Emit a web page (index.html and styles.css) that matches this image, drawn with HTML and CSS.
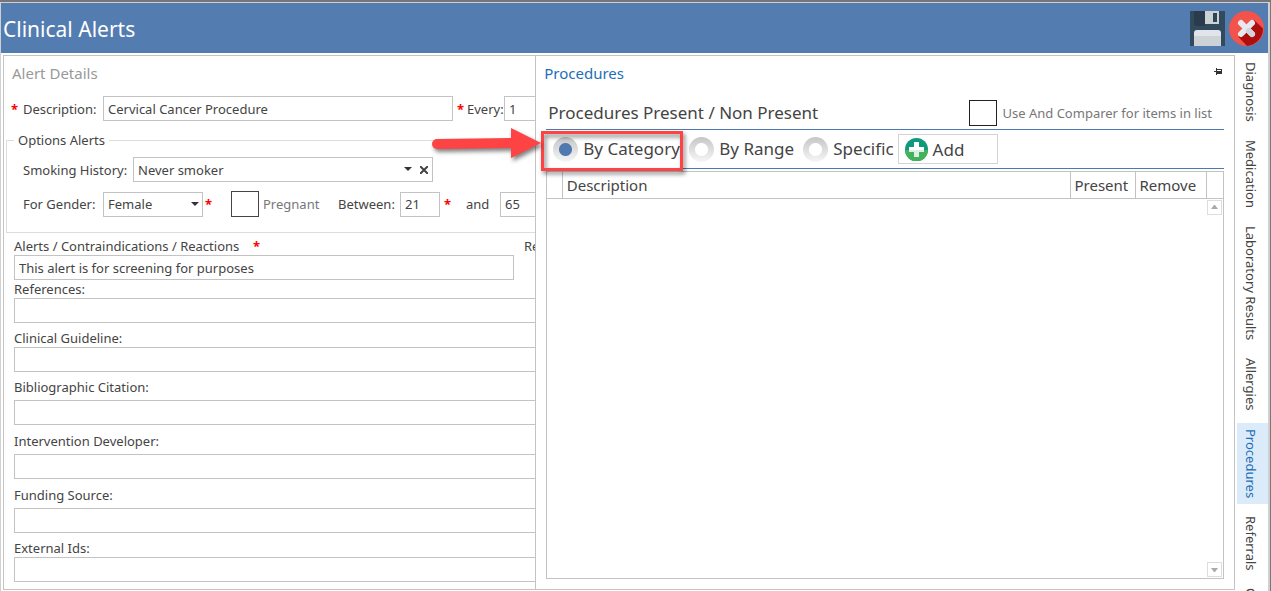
FILE: index.html
```html
<!DOCTYPE html>
<html lang="en">
<head>
    <meta charset="UTF-8">
    <meta name="viewport" content="width=device-width, initial-scale=1.0">
    <title>Clinical Alerts</title>
    <link rel="stylesheet" href="styles.css">
</head>
<body>
    <div class="window">
        <header class="titlebar">
            <h1>Clinical Alerts</h1>
            <button type="button" class="icon-btn" aria-label="Save">
                <svg width="35" height="35" viewBox="0 0 35 35">
                    <path fill="#324a5e" d="M0 0h35v35H0z"/>
                    <path fill="#2b3b4e" d="M4 0h11v15H7a3 3 0 0 1-3-3z"/>
                    <path fill="#cdd2d6" d="M15 0h14v13H15z"/>
                    <path fill="#2f4454" d="M23 2h4v9h-4z"/>
                    <path fill="#e1e5e9" d="M4 25v-3a3 3 0 0 1 3-3h21a3 3 0 0 1 3 3v3z"/>
                    <path fill="#cdd2d6" d="M4 25h27v10H4z"/>
                </svg>
            </button>
            <button type="button" class="icon-btn" aria-label="Close">
                <svg width="35" height="35" viewBox="0 0 35 35">
                    <circle cx="17.500" cy="17.500" r="17.500" fill="#f3534b"/>
                    <path fill="#ad0e0e" d="M25 9l9 8.500A17.500 17.500 0 0 1 18 35L9.500 26z"/>
                    <path stroke="#e6e9ee" stroke-width="6" stroke-linecap="round" d="M12 12l11 11M23 12L12 23"/>
                    <path stroke="#d0d5da" stroke-width="6" stroke-linecap="round" d="M20 20l3 3"/>
                </svg>
            </button>
        </header>

        <div class="content">
            <form class="details">
                <h2 class="panel-title muted">Alert Details</h2>
                <div class="row row-description">
                    <span class="req">*</span>
                    <label for="description">Description:</label>
                    <input type="text" id="description" class="box w-description" value="Cervical Cancer Procedure">
                    <span class="req">*</span>
                    <label for="every">Every:</label>
                    <input type="text" id="every" class="box w-small" value="1">
                </div>

                <fieldset class="options">
                    <legend>Options Alerts</legend>
                    <div class="row">
                        <label for="smoking" class="label-smoking">Smoking History:</label>
                        <div class="combo w-smoking">
                            <select id="smoking" class="box">
                                <option>Never smoker</option>
                            </select>
                            <svg class="caret caret-clear" width="8" height="4" viewBox="0 0 8 4"><path fill="#333" d="M0 0h8L4 4z"/></svg>
                            <button type="button" class="clear" aria-label="Clear">
                                <svg width="8" height="8" viewBox="0 0 8 8"><path stroke="#444" stroke-width="2" d="M0 0l8 8M8 0L0 8"/></svg>
                            </button>
                        </div>
                    </div>
                    <div class="row row-gender">
                        <label for="gender" class="label-gender">For Gender:</label>
                        <div class="combo w-gender">
                            <select id="gender" class="box">
                                <option>Female</option>
                            </select>
                            <svg class="caret" width="8" height="4" viewBox="0 0 8 4"><path fill="#333" d="M0 0h8L4 4z"/></svg>
                        </div>
                        <span class="req req-gender">*</span>
                        <input type="checkbox" id="pregnant" class="check">
                        <label for="pregnant" class="label-pregnant">Pregnant</label>
                        <label for="ageFrom" class="label-between">Between:</label>
                        <input type="text" id="ageFrom" class="box w-age" value="21">
                        <span class="req req-age">*</span>
                        <label for="ageTo" class="label-and">and</label>
                        <input type="text" id="ageTo" class="box w-small" value="65">
                    </div>
                </fieldset>

                <div class="fields">
                    <div class="field">
                        <div class="field-head">
                            <label for="alerts">Alerts / Contraindications / Reactions</label>
                            <span class="req">*</span>
                            <span class="next-label">Re</span>
                        </div>
                        <input type="text" id="alerts" class="box w-alerts" value="This alert is for screening for purposes">
                    </div>
                    <div class="field">
                        <label for="references">References:</label>
                        <input type="text" id="references" class="box">
                    </div>
                    <div class="field spaced">
                        <label for="guideline">Clinical Guideline:</label>
                        <input type="text" id="guideline" class="box">
                    </div>
                    <div class="field spaced loose">
                        <label for="citation">Bibliographic Citation:</label>
                        <input type="text" id="citation" class="box">
                    </div>
                    <div class="field spaced loose">
                        <label for="developer">Intervention Developer:</label>
                        <input type="text" id="developer" class="box">
                    </div>
                    <div class="field spaced loose">
                        <label for="funding">Funding Source:</label>
                        <input type="text" id="funding" class="box">
                    </div>
                    <div class="field spaced">
                        <label for="external">External Ids:</label>
                        <input type="text" id="external" class="box">
                    </div>
                </div>
            </form>

            <section class="procedures">
                <div class="panel-head">
                    <h2 class="panel-title accent">Procedures</h2>
                    <button type="button" class="pin" aria-label="Pin">
                        <svg width="9" height="7" viewBox="0 0 9 7"><path fill="#333" d="M0 3h2V0h1v1h5v5H3v1H2V4H0z"/><path fill="#fff" d="M3 2h4v1H3z"/></svg>
                    </button>
                </div>
                <div class="list-head">
                    <h3>Procedures Present / Non Present</h3>
                    <input type="checkbox" id="andComparer" class="check">
                    <label for="andComparer">Use And Comparer for items in list</label>
                </div>
                <div class="modes">
                    <label class="mode mode-category"><input type="radio" name="mode" checked>By Category</label>
                    <label class="mode mode-range"><input type="radio" name="mode">By Range</label>
                    <label class="mode"><input type="radio" name="mode">Specific</label>
                    <button type="button" class="add">
                        <svg width="23" height="23" viewBox="0 0 23 23">
                            <circle cx="11.500" cy="11.500" r="11.500" fill="#0e9b7b"/>
                            <path fill="#45b15d" d="M0 12h23a11.500 11.500 0 0 1-23 0z"/>
                            <path fill="#fff" d="M9 4h5v5h5v5h-5v5H9v-5H4V9h5z"/>
                            <path fill="#dcefe3" d="M4 12h15v2h-5v5H9v-5H4z"/>
                        </svg>
                        Add
                    </button>
                </div>
                <div class="grid">
                    <table>
                        <thead>
                            <tr>
                                <th class="col-handle"></th>
                                <th>Description</th>
                                <th class="col-present">Present</th>
                                <th class="col-remove">Remove</th>
                                <th class="col-scroll"></th>
                            </tr>
                        </thead>
                        <tbody></tbody>
                    </table>
                    <div class="scrollbar">
                        <button type="button" aria-label="Scroll up"><svg width="7" height="4" viewBox="0 0 7 4"><path fill="#aaa" d="M0 4h7L4 0H3z"/></svg></button>
                        <button type="button" aria-label="Scroll down"><svg width="7" height="4" viewBox="0 0 7 4"><path fill="#aaa" d="M0 0h7L4 4H3z"/></svg></button>
                    </div>
                </div>

                <div class="callout"></div>
                <svg class="arrow" width="116" height="40" viewBox="0 0 116 40">
                    <path fill="#fd4343" d="M5 13L79 12V2l30 15-30 15V22L5 23a5 5 0 0 1 0-10z"/>
                </svg>
            </section>

            <nav class="tabs">
                <a href="#diagnosis">Diagnosis</a>
                <a href="#medication">Medication</a>
                <a href="#laboratory">Laboratory Results</a>
                <a href="#allergies">Allergies</a>
                <a href="#procedures" class="active">Procedures</a>
                <a href="#referrals">Referrals</a>
                <a href="#more">C</a>
            </nav>
        </div>
    </div>
</body>
</html>
```
FILE: styles.css
```css
* {
    box-sizing: border-box;
}
body {
    margin: 0;
    font-family: "Noto Sans", "Open Sans", sans-serif;
    font-size: 13px;
    line-height: 18px;
    color: #444;
    background: #777;
}
h1, h2, h3 {
    margin: 0;
    font-weight: normal;
}
button {
    padding: 0;
    border: 0;
    background: none;
    font-family: inherit;
    color: inherit;
}
svg {
    display: block;
    fill: none;
}
.window {
    display: flex;
    flex-direction: column;
    height: 100vh;
    border-top: 2px solid #77747a;
    border-right: 1px solid #777;
    overflow: hidden;
}
.titlebar {
    display: flex;
    flex: none;
    align-items: center;
    gap: 4px;
    height: 51px;
    padding: 0 4px 0 2px;
    background: #537cb0;
    color: #fff;
    border: 1px solid #d0d0d0;
    border-right-width: 2px;
    border-bottom: 0;
}
.titlebar h1 {
    flex: 1;
    padding-top: 2px;
    font-size: 21px;
    line-height: 28px;
}
.content {
    display: flex;
    flex: 1;
    min-height: 0;
    padding: 2px 0 0 2px;
    background: #fff;
    border-left: 1px solid #d0d0d0;
    border-right: 2px solid #d0d0d0;
}

/* left form */
.details {
    flex: 1;
    min-width: 0;
    margin-bottom: 1px;
    border: 1px solid #c3c3c3;
    border-right: 0;
    overflow: hidden;
}
.panel-title {
    font-size: 15px;
    line-height: 20px;
}
.details .panel-title {
    padding: 7px 8px 13px;
}
.muted {
    color: #999;
}
.accent {
    color: #1e6fb8;
}
.row {
    display: flex;
    align-items: center;
    white-space: nowrap;
}
.row > * {
    flex: none;
}
.req {
    color: #f00;
    font-weight: bold;
    width: 8px;
}
.row-description {
    padding-left: 7px;
}
.row-description label {
    width: 80px;
    margin-left: 4px;
}
.row-description .req ~ .req {
    margin-left: 4px;
}
.row-description .req ~ .req + label {
    width: 37px;
    margin-left: 2px;
}
.box {
    width: 100%;
    height: 25px;
    padding: 0 4px;
    border: 1px solid #c3c3c3;
    border-radius: 0;
    background: #fff;
    font-family: inherit;
    font-size: 13px;
    color: #444;
}
select.box {
    display: block;
    appearance: none;
}
.w-description {
    width: 350px;
}
.w-small {
    width: 60px;
}
.w-age {
    width: 40px;
}
.w-smoking {
    width: 300px;
}
.w-gender {
    width: 100px;
}
.w-alerts {
    width: 500px;
}
.combo {
    position: relative;
}
.caret {
    position: absolute;
    top: 10px;
    right: 4px;
    pointer-events: none;
}
.caret-clear {
    right: 21px;
}
.clear {
    position: absolute;
    top: 9px;
    right: 5px;
}
.check {
    appearance: none;
    width: 28px;
    height: 26px;
    margin: 0;
    border: 1px solid #444;
    background: #fff;
}
.options {
    min-width: 110%;
    margin: 10px 0 0 2px;
    padding: 8px 0 15px 16px;
    border: 1px solid #ddd;
}
.options legend {
    height: 18px;
    margin-left: -9px;
    padding: 0 4px;
}
.row-gender {
    margin-top: 9px;
}
.label-smoking {
    width: 110px;
}
.label-gender {
    width: 80px;
}
.req-gender {
    margin: 0 18px 0 2px;
}
.label-pregnant {
    width: 76px;
    padding-left: 4px;
    color: #777;
}
.label-between {
    width: 65px;
    padding-left: 3px;
}
.req-age {
    margin: 0 14px 0 4px;
}
.label-and {
    width: 34px;
}
.fields {
    padding: 4px 0 0 10px;
}
.field {
    width: 110%;
}
.field label {
    display: block;
}
.field .box {
    display: block;
}
.field-head {
    display: flex;
    gap: 10px;
}
.field-head label {
    flex: none;
    width: 229px;
}
.next-label {
    margin-left: 253px;
}
.spaced {
    margin-top: 6px;
}
.loose .box {
    margin-top: 4px;
}
.loose + .loose {
    margin-top: 7px;
}

/* docked panel */
.procedures {
    position: relative;
    display: flex;
    flex: 0 0 calc(55% + 4px);
    flex-direction: column;
    margin-bottom: 1px;
    padding: 7px 10px 10px;
    border: 1px solid #c3c3c3;
}
.panel-head {
    display: flex;
    align-items: center;
    padding-right: 1px;
    margin-left: -2px;
}
.panel-head h2 {
    flex: 1;
}
.pin {
    margin-bottom: 4px;
}
.list-head {
    display: flex;
    align-items: center;
    height: 47px;
    padding: 13px 12px 0 2px;
    border-bottom: 1px solid #4a7ab5;
    color: #777;
}
.list-head h3 {
    flex: 1;
    font-size: 17px;
    line-height: 24px;
    color: #444;
}
.list-head .check {
    margin-right: 6px;
    border-color: #222;
}
.modes {
    display: flex;
    align-items: center;
    height: 39px;
    padding-left: 7px;
    border-bottom: 1px solid #4a7ab5;
    white-space: nowrap;
}
.mode {
    display: flex;
    flex: none;
    align-items: center;
    gap: 5px;
    font-size: 17px;
}
.mode-category {
    width: 136px;
}
.mode-range {
    width: 114px;
}
.mode input {
    appearance: none;
    width: 25px;
    height: 25px;
    margin: 0;
    border-radius: 50%;
    background: radial-gradient(circle, #fff 0 6px, transparent 7px), linear-gradient(#c6c6c6, #f6f6f6);
}
.mode input:checked {
    background: radial-gradient(circle, #5079b0 0 6px, transparent 7px), linear-gradient(#c6c6c6, #f6f6f6);
}
.add {
    display: flex;
    align-items: center;
    gap: 5px;
    width: 100px;
    height: 30px;
    margin-left: 4px;
    padding-left: 6px;
    border: 1px solid #d4d4d4;
    font-size: 17px;
}
.grid {
    display: flex;
    flex: 1;
    flex-direction: column;
    margin-top: 2px;
    border: 1px solid #c3c3c3;
}
table {
    width: 100%;
    table-layout: fixed;
    border-collapse: collapse;
}
th {
    height: 26px;
    padding: 0 4px;
    border-bottom: 1px solid #c3c3c3;
    border-left: 1px solid #c3c3c3;
    font-size: 15px;
    font-weight: normal;
    text-align: left;
}
th:first-child {
    border-left: 0;
}
.col-handle {
    width: 15px;
}
.col-present {
    width: 65px;
}
.col-remove {
    width: 71px;
}
.col-scroll {
    width: 17px;
}
.scrollbar {
    display: flex;
    flex: 1;
    flex-direction: column;
    align-items: flex-end;
    justify-content: space-between;
    padding: 1px;
}
.scrollbar button {
    display: flex;
    align-items: center;
    justify-content: center;
    width: 15px;
    height: 15px;
    border: 1px solid #ddd;
}

/* callout drawn over the panel */
.callout {
    position: absolute;
    top: 75px;
    left: 5px;
    width: 142px;
    height: 40px;
    border: 3px solid #fd4343;
    filter: drop-shadow(2px 3px 2px rgba(0, 0, 0, 0.5));
}
.arrow {
    position: absolute;
    top: 70px;
    left: -104px;
    filter: drop-shadow(2px 3px 2px rgba(0, 0, 0, 0.5));
}

/* side tabs */
.tabs {
    display: flex;
    flex: none;
    flex-direction: column;
    gap: 6px;
    width: 33px;
    padding: 1px 0 0 2px;
    overflow: hidden;
}
.tabs a {
    flex: none;
    width: 31px;
    padding: 6px 3px 6px 0;
    writing-mode: vertical-rl;
    line-height: 28px;
    color: #444;
    text-decoration: none;
}
.tabs .active {
    background: #dcebf9;
    color: #1e6fb8;
}
```
